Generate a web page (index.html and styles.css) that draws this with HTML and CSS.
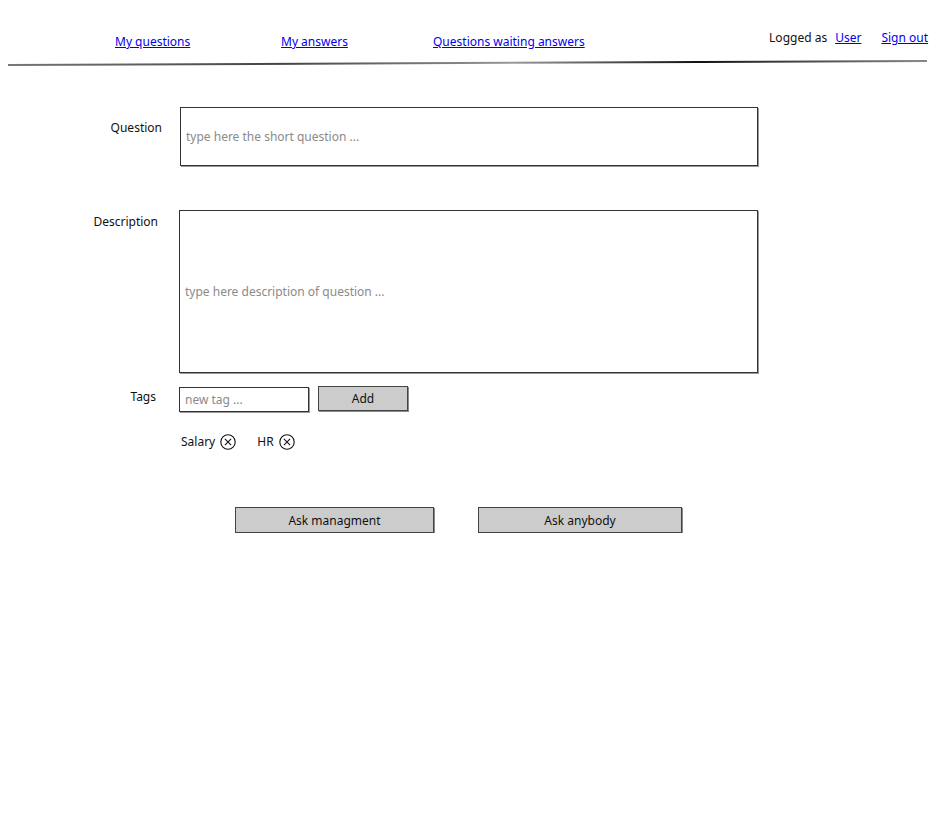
FILE: index.html
```html
<!DOCTYPE html>
<html>
<head>
<meta charset="utf-8">
<link rel="stylesheet" href="styles.css">
</head>
<body>
<header class="topbar">
  <nav class="nav">
    <span class="nav-item nav-1"><a href="#">My questions</a></span>
    <span class="nav-item nav-2"><a href="#">My answers</a></span>
    <span class="nav-item nav-3"><a href="#">Questions waiting answers</a></span>
  </nav>
  <div class="account">
    <span class="logged">Logged as</span>
    <a href="#" class="user">User</a>
    <a href="#" class="signout">Sign out</a>
  </div>
</header>
<div class="rule"></div>

<main class="form">
  <div class="row row-question">
    <label class="label">Question</label>
    <div class="box box-question"><span class="ph">type here the short question ...</span></div>
  </div>
  <div class="row row-desc">
    <label class="label">Description</label>
    <div class="box box-desc"><span class="ph">type here description of question ...</span></div>
  </div>
  <div class="row row-tags">
    <label class="label">Tags</label>
    <div class="tag-input-line">
      <div class="box box-tag"><span class="ph">new tag ...</span></div>
      <div class="btn btn-add">Add</div>
    </div>
  </div>
  <div class="row row-chips">
    <span class="label"></span>
    <div class="chips">
      <span class="chip">Salary <svg class="x" width="16" height="16" viewBox="0 0 16 16"><circle cx="8" cy="8" r="7.2" fill="none" stroke="#111" stroke-width="1.1"/><path d="M4.9 4.9 L11.1 11.1 M11.1 4.9 L4.9 11.1" stroke="#111" stroke-width="1.1" fill="none"/></svg></span>
      <span class="chip">HR <svg class="x" width="16" height="16" viewBox="0 0 16 16"><circle cx="8" cy="8" r="7.2" fill="none" stroke="#111" stroke-width="1.1"/><path d="M4.9 4.9 L11.1 11.1 M11.1 4.9 L4.9 11.1" stroke="#111" stroke-width="1.1" fill="none"/></svg></span>
    </div>
  </div>
  <div class="actions">
    <div class="btn btn-mgmt">Ask managment</div>
    <div class="btn btn-any">Ask anybody</div>
  </div>
</main>
</body>
</html>
```

FILE: styles.css
```css
* { box-sizing: border-box; }
html, body { margin: 0; padding: 0; background: #fff; }
body {
  width: 944px;
  font-family: "Comic Sans MS", "Noto Sans", sans-serif;
  font-size: 12px;
  color: #111;
}
a { color: #0000ee; text-decoration: underline; }

.topbar {
  display: flex;
  justify-content: space-between;
  align-items: flex-start;
  padding: 33px 16px 0 115px;
  height: 60px;
}
.nav { display: flex; line-height: 18px; }
.nav-1 { width: 166px; }
.nav-2 { width: 152px; }
.account {
  display: flex;
  line-height: 18px;
  margin-top: -4px;
}
.user { margin-left: 8px; }
.signout { margin-left: 20px; }

.rule {
  margin: 2px 17px 0 8px;
  height: 2px;
  background: linear-gradient(90deg, #777 0%, #444 30%, #999 55%, #111 75%, #888 100%);
  transform: rotate(-0.25deg);
}

.form { padding-top: 43px; }
.row { display: flex; }
.label {
  width: 179px;
  padding-right: 17px;
  text-align: right;
  flex: none;
}
.box {
  border: 1px solid #333;
  box-shadow: 1px 1px 0 #999;
  background: #fff;
  display: flex;
  align-items: center;
  padding-left: 5px;
}
.ph { color: #8a8a8a; }

.row-question .label { padding-top: 12px; }
.box-question { width: 578px; height: 59px; margin-left: 1px; }

.row-desc { margin-top: 44px; }
.row-desc .label { padding-top: 3px; padding-right: 21px; }
.box-desc { width: 579px; height: 163px; }

.row-tags { margin-top: 13px; }
.row-tags .label { padding-top: 2px; padding-right: 23px; }
.tag-input-line { display: flex; align-items: flex-start; }
.box-tag { width: 130px; height: 25px; margin-top: 1px; }

.btn {
  background: #cccccc;
  border: 1px solid #444;
  box-shadow: 1px 1px 0 #888;
  display: flex;
  align-items: center;
  justify-content: center;
  height: 25px;
}
.btn-add { width: 90px; margin-left: 9px; }

.row-chips { margin-top: 22px; }
.chips { display: flex; padding-left: 2px; line-height: 16px; }
.chip { display: inline-flex; align-items: center; gap: 5px; }
.chip + .chip { margin-left: 21px; }
.x { display: block; }

.actions {
  display: flex;
  padding-left: 235px;
  margin-top: 57px;
}
.btn-mgmt { width: 199px; height: 26px; }
.btn-any { width: 204px; height: 26px; margin-left: 44px; }
```
